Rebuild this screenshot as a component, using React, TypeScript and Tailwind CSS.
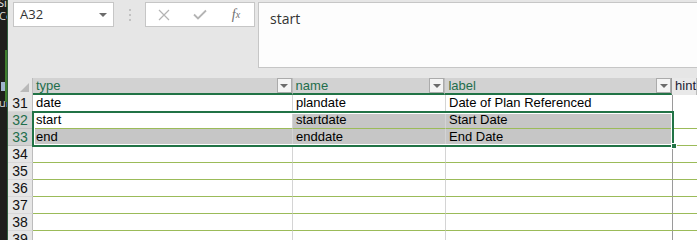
import React from "react";

type Row = {
  n: number;
  a?: string;
  b?: string;
  c?: string;
  sel?: boolean;
  active?: boolean;
};

const rows: Row[] = [
  { n: 31, a: "date", b: "plandate", c: "Date of Plan Referenced" },
  { n: 32, a: "start", b: "startdate", c: "Start Date", sel: true, active: true },
  { n: 33, a: "end", b: "enddate", c: "End Date", sel: true },
  { n: 34 },
  { n: 35 },
  { n: 36 },
  { n: 37 },
  { n: 38 },
  { n: 39 },
];

const cellFont = { fontFamily: '"Liberation Sans", Arial, sans-serif' };
const uiFont = { fontFamily: '"Open Sans", "Noto Sans", sans-serif' };

function FilterButton() {
  return (
    <div className="flex h-[15px] w-[15px] items-center justify-center border border-[#ababab] bg-[#f4f4f4]">
      <div className="h-0 w-0 border-x-[4px] border-t-[4px] border-x-transparent border-t-[#6b6b6b]" />
    </div>
  );
}

function HeaderCell({
  label,
  width,
  selected,
  filter,
  last,
}: {
  label: string;
  width: string;
  selected?: boolean;
  filter?: boolean;
  last?: boolean;
}) {
  return (
    <div
      className={`flex h-full items-start ${width} ${
        selected
          ? "border-b-2 border-b-[#217346] bg-[#d2d2d2] text-[#1f6e4c]"
          : "bg-[#e9e9e9] text-[#1b1b33]"
      } ${last ? "border-r border-r-[#9a9a9a]" : "border-r border-r-[#bcbcbc]"}`}
    >
      <span className="flex-1 pl-[3px] text-[13px] leading-[15px]" style={cellFont}>
        {label}
      </span>
      {filter && <FilterButton />}
    </div>
  );
}

export default function App() {
  return (
    <div className="flex h-[240px] w-[697px] overflow-hidden bg-[#e6e6e6]">
      {/* desktop edge behind the window */}
      <div className="relative w-[7px] shrink-0 overflow-hidden bg-[#1e1f1c]" style={uiFont}>
        <div className="absolute left-[-2px] top-[-3px] text-[11px] leading-[11px] text-[#e8e8e8]">Si</div>
        <div className="absolute left-[-1px] top-[10px] text-[11px] leading-[11px] text-[#d8d8d8]">Co</div>
        <div className="absolute left-[1px] top-[82px] h-[9px] w-[6px] bg-[#9fb4cc]" />
        <div className="absolute left-[-1px] top-[97px] text-[11px] leading-[11px] text-[#d8d8d8]">ur</div>
        <div className="absolute left-[5px] top-[50px] h-[52px] w-[2px] bg-[#3f7d2d]" />
      </div>
      <div className="w-px shrink-0 bg-[#2f5e3e]" />

      <div className="flex min-w-0 flex-1 flex-col">
        {/* formula bar area */}
        <div className="flex h-[78px] shrink-0 items-start pl-[5px] pt-[2px]">
          <div className="flex h-[25px] w-[101px] shrink-0 items-center justify-between border border-[#c6c6c6] bg-white pl-[6px] pr-[6px]">
            <span className="text-[13px] text-[#333]" style={uiFont}>
              A32
            </span>
            <div className="h-0 w-0 border-x-[4px] border-t-[4px] border-x-transparent border-t-[#6b6b6b]" />
          </div>
          <div className="flex h-[25px] w-[31px] shrink-0 flex-col items-center justify-center gap-[3px]">
            <div className="h-[2px] w-[2px] bg-[#c2c2c2]" />
            <div className="h-[2px] w-[2px] bg-[#c2c2c2]" />
            <div className="h-[2px] w-[2px] bg-[#c2c2c2]" />
          </div>
          <div className="grid h-[25px] w-[110px] shrink-0 grid-cols-3 border border-[#c6c6c6] bg-white">
            <div className="flex items-center justify-center">
              <svg width="12" height="12" viewBox="0 0 12 12">
                <path d="M1 1 L11 11 M11 1 L1 11" stroke="#b4b4b4" strokeWidth="1.2" fill="none" />
              </svg>
            </div>
            <div className="flex items-center justify-center">
              <svg width="14" height="11" viewBox="0 0 14 11">
                <path d="M1 5.5 L5 9.5 L13 1.5" stroke="#b4b4b4" strokeWidth="1.8" fill="none" />
              </svg>
            </div>
            <div className="flex items-center justify-center text-[#707070]">
              <span
                className="text-[14px] italic leading-none"
                style={{ fontFamily: '"Liberation Serif", "Times New Roman", serif' }}
              >
                f
              </span>
              <span
                className="text-[10px] italic leading-none"
                style={{ fontFamily: '"Liberation Serif", "Times New Roman", serif' }}
              >
                x
              </span>
            </div>
          </div>
          <div className="ml-[3px] h-[66px] min-w-0 flex-1 border border-[#c6c6c6] border-r-0 bg-[#fdfdfd] pl-[11px] pt-[3px]">
            <span className="text-[14px] leading-[20px] text-[#333]" style={uiFont}>
              start
            </span>
          </div>
        </div>

        {/* grid */}
        <div className="relative flex-1 bg-white">
          {/* column header row */}
          <div className="flex h-[17px]">
            <div className="relative h-full w-[25px] shrink-0 border-r border-r-[#bcbcbc] bg-[#e6e6e6]">
              <div className="absolute bottom-[3px] right-[3px] h-0 w-0 border-b-[9px] border-l-[9px] border-b-[#b9b9b9] border-l-transparent" />
            </div>
            <HeaderCell label="type" width="w-[260px]" selected filter />
            <HeaderCell label="name" width="w-[153px]" selected filter />
            <HeaderCell label="label" width="w-[227px]" selected filter last />
            <HeaderCell label="hint" width="flex-1" />
          </div>

          {rows.map((r) => (
            <div key={r.n} className="flex h-[17px]" style={cellFont}>
              <div
                className={`flex h-full w-[25px] shrink-0 items-center justify-center border-b border-r text-[14px] ${
                  r.sel
                    ? "border-b-[#c0c0c0] border-r-[#9a9a9a] bg-[#d2d2d2] text-[#1f6e4c]"
                    : "border-b-[#d8d8d8] border-r-[#bcbcbc] bg-[#e6e6e6] text-[#111]"
                }`}
              >
                {r.n}
              </div>
              <div
                className={`flex h-full w-[260px] items-center border-b border-r border-b-[#9bbb59] border-r-[#d4d4d4] pl-[3px] text-[13px] text-black ${
                  r.sel && !r.active ? "bg-[#c6c6c6]" : "bg-white"
                }`}
              >
                {r.a}
              </div>
              <div
                className={`flex h-full w-[153px] items-center border-b border-r border-b-[#9bbb59] border-r-[#d4d4d4] pl-[3px] text-[13px] text-black ${
                  r.sel ? "bg-[#c6c6c6]" : "bg-white"
                }`}
              >
                {r.b}
              </div>
              <div
                className={`flex h-full w-[227px] items-center border-b border-r border-b-[#9bbb59] border-r-[#9a9a9a] pl-[3px] text-[13px] text-black ${
                  r.sel ? "bg-[#c6c6c6]" : "bg-white"
                }`}
              >
                {r.c}
              </div>
              <div
                className={`h-full flex-1 ${r.n === 31 ? "" : "border-b border-b-[#9bbb59]"}`}
              />
            </div>
          ))}

          {/* selection A32:C33 */}
          <div className="pointer-events-none absolute left-[24px] top-[33px] h-[36px] w-[642px] border-2 border-[#217346] shadow-[inset_0_0_0_1px_#ffffff]" />
          <div className="absolute left-[663px] top-[65px] h-[6px] w-[6px] border border-white bg-[#217346]" />
        </div>
      </div>
    </div>
  );
}
